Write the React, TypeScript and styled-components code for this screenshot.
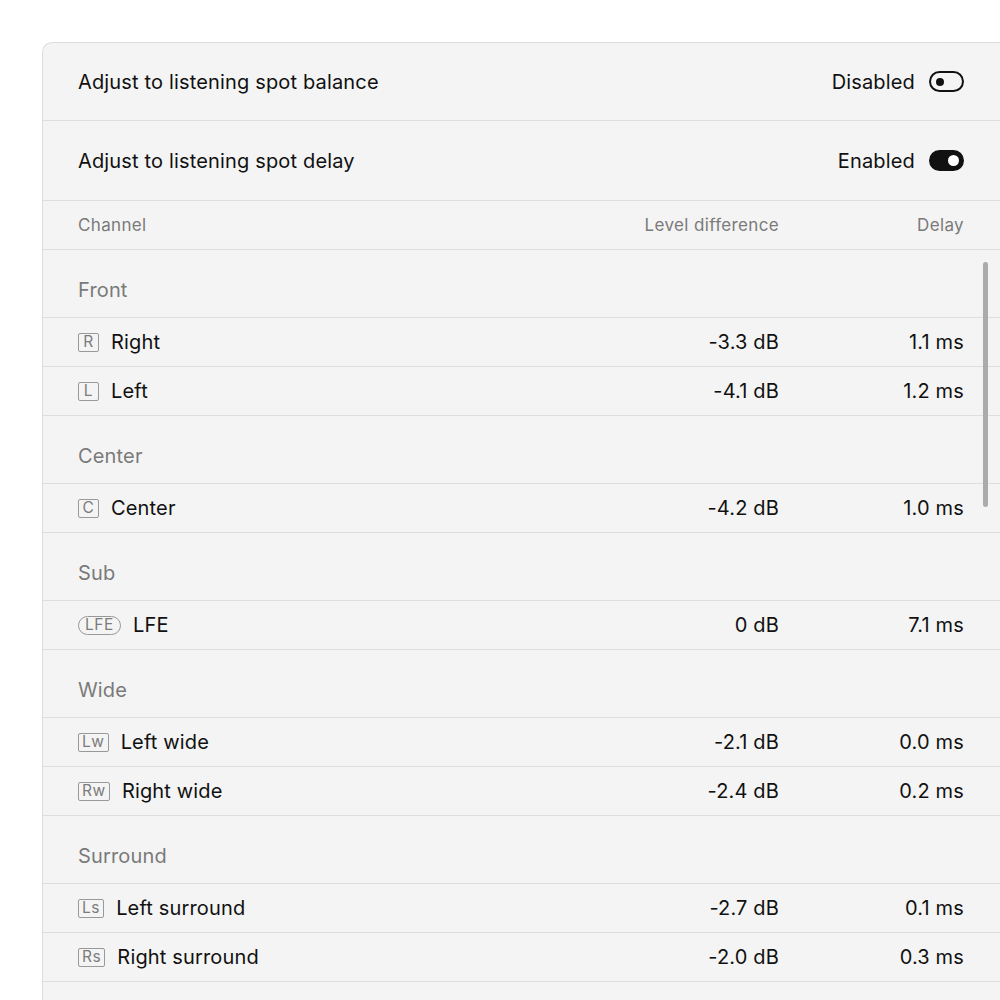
import React from "react";
import styled, { createGlobalStyle } from "styled-components";

const Global = createGlobalStyle`
  html, body { margin: 0; padding: 0; background: #ffffff; }
  body { font-family: Inter, "Noto Sans", sans-serif; color: #111; }
`;

const Page = styled.div`
  width: 1000px;
  height: 1000px;
  overflow: hidden;
  padding: 42px 0 0 42px;
  box-sizing: border-box;
`;

const Panel = styled.div`
  position: relative;
  height: 980px;
  background: #f4f4f4;
  border-top: 1px solid #dcdcdc;
  border-left: 1px solid #dcdcdc;
  border-top-left-radius: 10px;
`;

const SettingRow = styled.div<{ $h: number }>`
  height: ${(p) => p.$h}px;
  display: flex;
  align-items: center;
  justify-content: space-between;
  padding: 0 36px 0 35px;
  border-bottom: 1px solid #dedede;
  font-size: 20px;
  letter-spacing: 0.16px;
`;

const Right = styled.div`
  display: flex;
  align-items: center;
  gap: 14px;
`;

const Toggle = styled.div<{ $on: boolean }>`
  width: 35px;
  height: 21px;
  box-sizing: border-box;
  border-radius: 11px;
  border: 2px solid #111;
  background: ${(p) => (p.$on ? "#111" : "transparent")};
  display: flex;
  align-items: center;
  justify-content: ${(p) => (p.$on ? "flex-end" : "flex-start")};
  padding: 0 ${(p) => (p.$on ? "3px" : "5px")};
`;

const Knob = styled.div<{ $on: boolean }>`
  width: ${(p) => (p.$on ? 11 : 8)}px;
  height: ${(p) => (p.$on ? 11 : 8)}px;
  border-radius: 50%;
  background: ${(p) => (p.$on ? "#fff" : "#111")};
`;

const Grid = styled.div<{ $h: number; $head?: boolean }>`
  height: ${(p) => p.$h}px;
  display: grid;
  grid-template-columns: 1fr 200px 185px;
  align-items: center;
  padding: 0 36px 0 35px;
  border-bottom: 1px solid #dedede;
  font-size: ${(p) => (p.$head ? "17px" : "20px")};
  letter-spacing: ${(p) => (p.$head ? "0.35px" : "0.16px")};
  color: ${(p) => (p.$head ? "#7a7a7a" : "#111")};
`;

const Num = styled.div`
  text-align: right;
`;

const GroupRow = styled.div`
  height: 68px;
  box-sizing: border-box;
  display: flex;
  align-items: flex-end;
  padding: 0 35px 15px;
  border-bottom: 1px solid #dedede;
  font-size: 20px;
  letter-spacing: 0.16px;
  color: #7a7a7a;
`;

const Name = styled.div`
  display: flex;
  align-items: center;
  gap: 12px;
`;

const Badge = styled.span<{ $pill?: boolean }>`
  display: inline-flex;
  align-items: center;
  justify-content: center;
  height: 19px;
  min-width: 21px;
  padding: 0 ${(p) => (p.$pill ? "6px" : "3px")};
  box-sizing: border-box;
  border: 1px solid #999999;
  border-radius: ${(p) => (p.$pill ? "10px" : "2px")};
  font-size: 15.5px;
  letter-spacing: 0.6px;
  color: #7c7c7c;
  line-height: 1;
`;

const Scrollbar = styled.div`
  position: absolute;
  right: 12px;
  top: 219px;
  width: 5px;
  height: 245px;
  border-radius: 3px;
  background: #ababab;
`;

type Ch = { badge: string; name: string; level: string; delay: string; pill?: boolean };
const groups: { title: string; items: Ch[] }[] = [
  { title: "Front", items: [
    { badge: "R", name: "Right", level: "-3.3 dB", delay: "1.1 ms" },
    { badge: "L", name: "Left", level: "-4.1 dB", delay: "1.2 ms" },
  ] },
  { title: "Center", items: [{ badge: "C", name: "Center", level: "-4.2 dB", delay: "1.0 ms" }] },
  { title: "Sub", items: [{ badge: "LFE", name: "LFE", level: "0 dB", delay: "7.1 ms", pill: true }] },
  { title: "Wide", items: [
    { badge: "Lw", name: "Left wide", level: "-2.1 dB", delay: "0.0 ms" },
    { badge: "Rw", name: "Right wide", level: "-2.4 dB", delay: "0.2 ms" },
  ] },
  { title: "Surround", items: [
    { badge: "Ls", name: "Left surround", level: "-2.7 dB", delay: "0.1 ms" },
    { badge: "Rs", name: "Right surround", level: "-2.0 dB", delay: "0.3 ms" },
  ] },
];

export default function App() {
  return (
    <Page>
      <Global />
      <Panel>
        <SettingRow $h={77}>
          <span>Adjust to listening spot balance</span>
          <Right>
            <span>Disabled</span>
            <Toggle $on={false}><Knob $on={false} /></Toggle>
          </Right>
        </SettingRow>
        <SettingRow $h={79}>
          <span>Adjust to listening spot delay</span>
          <Right>
            <span>Enabled</span>
            <Toggle $on={true}><Knob $on={true} /></Toggle>
          </Right>
        </SettingRow>
        <Grid $h={48} $head>
          <div>Channel</div>
          <Num>Level difference</Num>
          <Num>Delay</Num>
        </Grid>
        {groups.map((g) => (
          <React.Fragment key={g.title}>
            <GroupRow>{g.title}</GroupRow>
            {g.items.map((c) => (
              <Grid $h={48} key={c.name}>
                <Name>
                  <Badge $pill={c.pill}>{c.badge}</Badge>
                  <span>{c.name}</span>
                </Name>
                <Num>{c.level}</Num>
                <Num>{c.delay}</Num>
              </Grid>
            ))}
          </React.Fragment>
        ))}
        <Scrollbar />
      </Panel>
    </Page>
  );
}
